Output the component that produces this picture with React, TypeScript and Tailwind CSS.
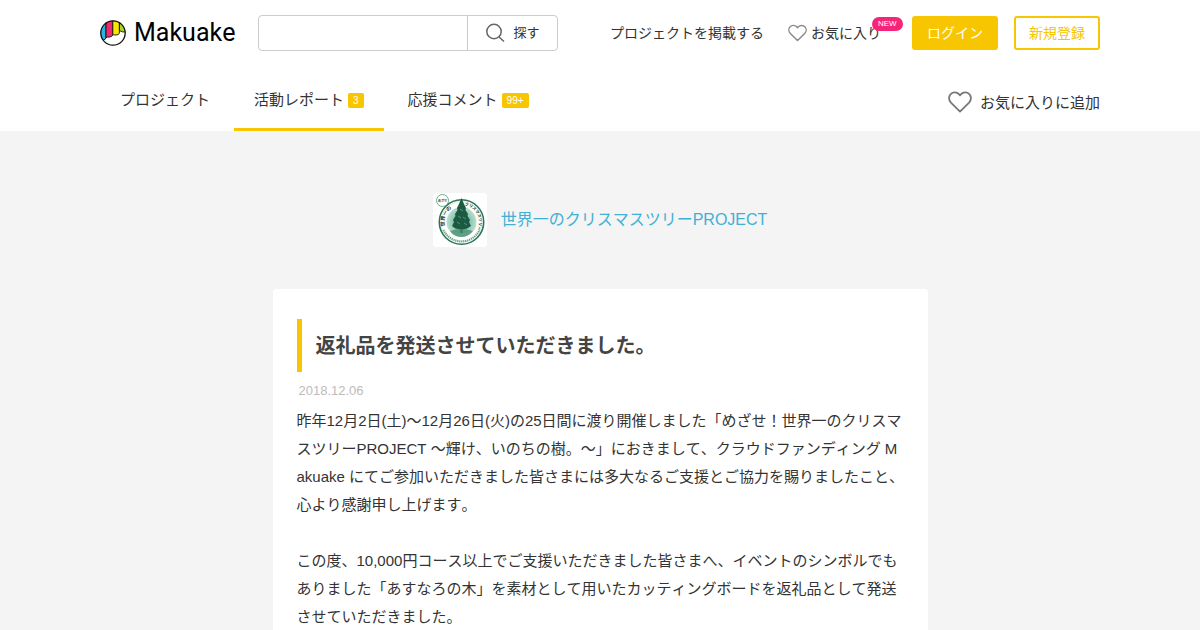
import type React from "react"
import { useState } from "react"

interface Tab {
  id: string
  label: string
  count?: string
}

const tabs: Tab[] = [
  { id: "project", label: "プロジェクト" },
  { id: "report", label: "活動レポート", count: "3" },
  { id: "comment", label: "応援コメント", count: "99+" },
]

const paragraphs = [
  "昨年12月2日(土)〜12月26日(火)の25日間に渡り開催しました「めざせ！世界一のクリスマスツリーPROJECT 〜輝け、いのちの樹。〜」におきまして、クラウドファンディング Makuake にてご参加いただきました皆さまには多大なるご支援とご協力を賜りましたこと、心より感謝申し上げます。",
  "この度、10,000円コース以上でご支援いただきました皆さまへ、イベントのシンボルでもありました「あすなろの木」を素材として用いたカッティングボードを返礼品として発送させていただきました。",
]

function HeartIcon({ className }: { className?: string }) {
  return (
    <svg viewBox="0 0 24 22" fill="none" stroke="currentColor" className={className} aria-hidden="true">
      <path
        d="M12 20.6 2.9 11.6C.5 9.1.6 5.300 2.700 3.100 5 .8 8.700.9 11 3.200L12 4.300l1-1.100c2.300-2.300 6-2.400 8.300-.1 2.100 2.200 2.200 6-.2 8.500Z"
        strokeWidth="1.8"
        strokeLinejoin="round"
      />
    </svg>
  )
}

// ロゴマーク
function LogoMark() {
  return (
    <svg viewBox="0 0 26 26" className="size-[26px]" aria-hidden="true">
      <defs>
        <clipPath id="mark">
          <circle cx="13" cy="13" r="12.200" />
        </clipPath>
      </defs>
      <circle cx="13" cy="13" r="12.200" fill="#fff" />
      <g clipPath="url(#mark)" stroke="#111" strokeWidth=".9">
        <path d="M0 0H6V18Q5.500 19.800 3.200 20L0 20Z" fill="#27b5e0" />
        <path d="M6 0H12.800V15Q12 17 9.500 17 7 17 6 17.500Z" fill="#f0286f" />
        <path d="M12.800 0H19.400V13Q19 15 16 15 13.300 15 12.800 14.500Z" fill="#fde500" />
        <path d="M19.400 0H26V12Q22 12.500 19.400 10.500Z" fill="#a4d629" />
      </g>
      <circle cx="13" cy="13" r="12.200" fill="none" stroke="#111" strokeWidth="1.300" />
    </svg>
  )
}

// プロジェクトオーナーのアイコン
function OwnerIcon() {
  return (
    <svg viewBox="0 0 54 54" className="size-[54px] rounded-sm bg-white" aria-hidden="true">
      <defs>
        <path id="arcLeft" d="M12 33A17 17 0 0 1 28 12" />
        <path id="arcRight" d="M31.500 12.300A17 17 0 0 1 40 42" />
        <path id="arcBottom" d="M10.500 37A20 20 0 0 0 46.500 37" />
        <radialGradient id="glow">
          <stop offset="0" stopColor="#54a184" />
          <stop offset="1" stopColor="#b9e0cf" />
        </radialGradient>
      </defs>
      <circle cx="28.500" cy="29" r="22.200" fill="#fff" stroke="#2c7657" strokeWidth="1.600" />
      <circle cx="28.500" cy="29" r="20.500" fill="none" stroke="#b9dccd" strokeWidth=".6" />
      <circle cx="28.500" cy="29" r="15" fill="url(#glow)" />
      <path
        d="M28.500 5 31 11 33 15 32.500 17 35 21 34.500 23 37 27 36 29 38 33 34 35.500 29.500 36.500V40H27.500V36.500L22.500 35.500 19 33 21 29 20 27 22.500 23 22 21 24.500 17 24 15 26 11Z"
        fill="#1c5942"
      />
      <path d="m27 16 3 2m-5 5 3 2m2-1 3 2m-9 3 3 2m4-1 3 2" stroke="#4c9779" strokeWidth="1" />
      <path d="M17 38Q28.500 34 40 38 35 44 28.500 44 21 44 17 38Z" fill="#3e886a" opacity=".7" />
      <g fontFamily="'Noto Sans CJK JP', sans-serif" fontWeight="700" fill="#142e23">
        <text fontSize="5">
          <textPath href="#arcLeft">世界一の</textPath>
        </text>
        <text fontSize="4">
          <textPath href="#arcRight">クリスマスツリー</textPath>
        </text>
      </g>
      {/* 下側の英字は細かい点線で表現 */}
      <use href="#arcBottom" fill="none" stroke="#5c9c80" strokeWidth="2" strokeDasharray="1.200 .8" />
      <circle cx="9.500" cy="7.500" r="6" fill="#fff" stroke="#509477" strokeWidth=".8" />
      <text x="9.500" y="9" fontSize="3" fontWeight="700" textAnchor="middle" fill="#244b3b">
        めざせ
      </text>
    </svg>
  )
}

function Header() {
  const [keyword, setKeyword] = useState("")

  const handleSubmit = (e: React.FormEvent<HTMLFormElement>) => {
    e.preventDefault()
  }

  return (
    <header className="mx-auto flex h-[66px] max-w-[1000px] items-center text-sm">
      <a href="#top" className="flex items-center gap-2 text-black">
        <LogoMark />
        <span className="w-[104px] font-[Roboto,sans-serif] text-[25px] leading-8">Makuake</span>
      </a>

      <form
        onSubmit={handleSubmit}
        className="ml-5 flex h-9 w-[300px] rounded border border-[#ccc] text-[13px]"
      >
        <input
          type="search"
          aria-label="キーワード"
          value={keyword}
          onChange={(e) => setKeyword(e.target.value)}
          className="min-w-0 flex-1 px-3 outline-none"
        />
        <button type="submit" className="flex w-[90px] items-center justify-center gap-2 border-l border-[#ccc]">
          <svg viewBox="0 0 20 20" fill="none" stroke="#666" strokeWidth="1.500" className="size-5" aria-hidden="true">
            <circle cx="9" cy="8.500" r="7.200" />
            <path d="m14 14 5 4.500" />
          </svg>
          探す
        </button>
      </form>

      <nav className="ml-auto flex items-center">
        <a href="#publish">プロジェクトを掲載する</a>
        <a href="#favorites" className="relative ml-6 flex items-center gap-1">
          <HeartIcon className="h-[18px] w-[19px] text-[#888]" />
          お気に入り
          <span className="absolute -top-1.5 left-[84px] rounded-full bg-[#f7257a] px-1.5 font-[Liberation_Sans,sans-serif] text-[8px] leading-[14px] text-white">
            NEW
          </span>
        </a>
        <button
          type="button"
          className="ml-[31px] h-[34px] w-[86px] rounded-[3px] bg-[#f7c600] text-white"
        >
          ログイン
        </button>
        <button
          type="button"
          className="ml-4 h-[34px] w-[86px] rounded-[3px] border-2 border-[#f7c600] text-[#f7c600]"
        >
          新規登録
        </button>
      </nav>
    </header>
  )
}

function ProjectTabs() {
  const [activeTab, setActiveTab] = useState("report")

  return (
    <div className="mx-auto flex h-[65px] max-w-[1000px] items-stretch justify-between text-[15px]">
      <nav className="flex gap-1">
        {tabs.map((tab) => (
          <a
            key={tab.id}
            href={`#${tab.id}`}
            onClick={() => setActiveTab(tab.id)}
            className={`flex items-center gap-1 border-b-[3px] px-5 pt-1.5 ${
              activeTab === tab.id ? "border-[#f7c600]" : "border-transparent"
            }`}
          >
            {tab.label}
            {tab.count && (
              <span className="rounded-xs bg-[#f7c600] px-[5px] text-[10px] leading-[15px] text-white">
                {tab.count}
              </span>
            )}
          </a>
        ))}
      </nav>
      <button type="button" className="flex items-center gap-2 pt-2.5">
        <HeartIcon className="-mt-1 h-[22px] w-6 text-[#777]" />
        お気に入りに追加
      </button>
    </div>
  )
}

export default function App() {
  return (
    <div
      id="top"
      className="min-h-screen bg-[#f4f4f4] font-['Liberation_Sans','Noto_Sans_CJK_JP',sans-serif] text-[#333] [font-kerning:none]"
    >
      <div className="bg-white">
        <Header />
        <ProjectTabs />
      </div>

      <main className="mx-auto max-w-[655px] pt-[62px]">
        <a href="#owner" className="flex items-center justify-center gap-3.5 text-[#40b0d5]">
          <OwnerIcon />
          世界一のクリスマスツリーPROJECT
        </a>

        <article className="mt-[42px] rounded bg-white pt-[30px] pr-[23px] pb-10 pl-6">
          <h1 className="flex h-[53px] items-center border-l-[5px] border-[#f7c600] pl-3.5 text-xl font-bold text-[#444]">
            返礼品を発送させていただきました。
          </h1>
          <time dateTime="2018-12-06" className="mt-[9px] block pl-0.5 text-[13px] leading-5 text-[#bbb]">
            2018.12.06
          </time>
          <div className="mt-1.5 flex flex-col gap-7 text-[15px] leading-7 break-all">
            {paragraphs.map((text) => (
              <p key={text}>{text}</p>
            ))}
          </div>
        </article>
      </main>
    </div>
  )
}
